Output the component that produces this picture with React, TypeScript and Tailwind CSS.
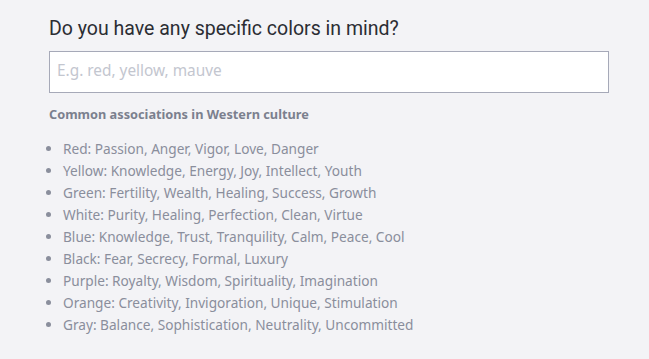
const associations = [
  "Red: Passion, Anger, Vigor, Love, Danger",
  "Yellow: Knowledge, Energy, Joy, Intellect, Youth",
  "Green: Fertility, Wealth, Healing, Success, Growth",
  "White: Purity, Healing, Perfection, Clean, Virtue",
  "Blue: Knowledge, Trust, Tranquility, Calm, Peace, Cool",
  "Black: Fear, Secrecy, Formal, Luxury",
  "Purple: Royalty, Wisdom, Spirituality, Imagination",
  "Orange: Creativity, Invigoration, Unique, Stimulation",
  "Gray: Balance, Sophistication, Neutrality, Uncommitted",
];

export default function App() {
  return (
    <div className="min-h-screen bg-[#f3f3f6] pl-[49px] pr-[40px] pt-[15px] font-['Noto_Sans',sans-serif]">
      <h2 className="font-['Roboto',sans-serif] text-[19.5px] leading-[28px] text-[#2b2d33]">
        Do you have any specific colors in mind?
      </h2>
      <input
        type="text"
        placeholder="E.g. red, yellow, mauve"
        className="mt-[8px] block h-[42px] w-[560px] border border-[#a6a9b8] bg-white px-[7px] pb-[3px] text-[15.4px] text-[#2b2d33] outline-none placeholder:text-[#c3c6cf]"
      />
      <p className="mt-[12px] text-[12.75px] font-bold leading-[18px] text-[#7b808e]">Common associations in Western culture</p>
      <ul className="mt-[15px] list-disc pl-[14px] text-[13.65px] leading-[22px] text-[#8a8e9c] marker:text-[#8a8e9c]">
        {associations.map((item) => (
          <li key={item}>{item}</li>
        ))}
      </ul>
    </div>
  );
}
